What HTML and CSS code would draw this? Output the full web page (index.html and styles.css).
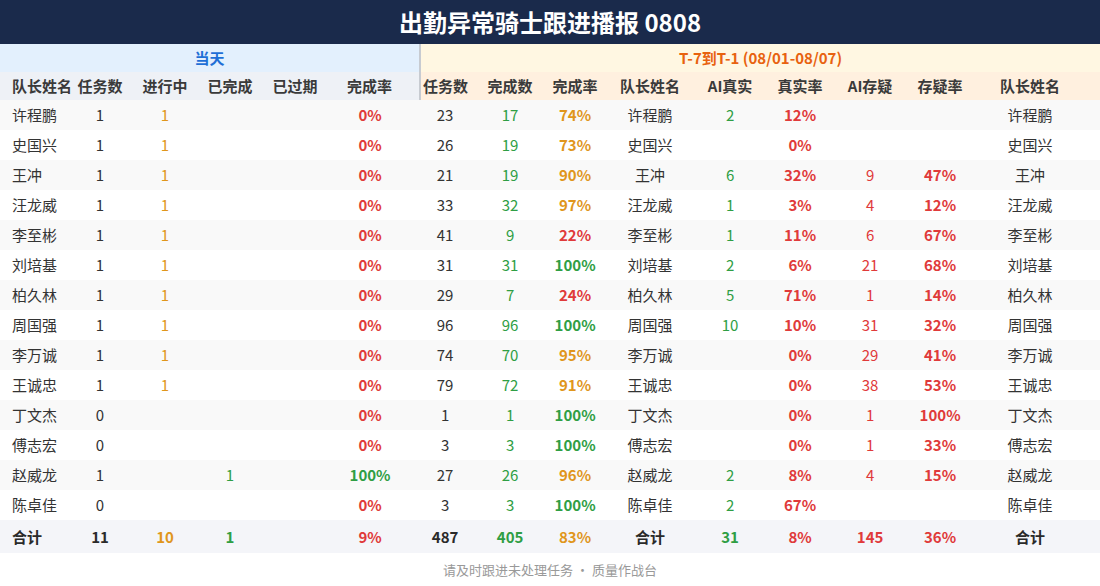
FILE: index.html
```html
<!DOCTYPE html>
<html lang="zh">
<head>
<meta charset="utf-8">
<title>出勤异常骑士跟进播报 0808</title>
<link rel="stylesheet" href="styles.css">
</head>
<body>
<div class="title">出勤异常骑士跟进播报 0808</div>
<table class="report">
  <colgroup>
    <col class="c1"><col class="c2"><col class="c3"><col class="c4"><col class="c5"><col class="c6">
    <col class="c7"><col class="c8"><col class="c9"><col class="c10"><col class="c11"><col class="c12"><col class="c13"><col class="c14"><col class="c15">
  </colgroup>
  <thead>
    <tr class="group">
      <th colspan="6" class="g-today">当天</th>
      <th colspan="9" class="g-week sep">T-7到T-1 (08/01-08/07)</th>
    </tr>
    <tr class="heads">
      <th class="lt name">队长姓名</th><th class="lt">任务数</th><th class="lt">进行中</th><th class="lt">已完成</th><th class="lt">已过期</th><th class="lt rate">完成率</th>
      <th class="rt sep">任务数</th><th class="rt">完成数</th><th class="rt">完成率</th><th class="rt">队长姓名</th><th class="rt">AI真实</th><th class="rt">真实率</th><th class="rt">AI存疑</th><th class="rt">存疑率</th><th class="rt last">队长姓名</th>
    </tr>
  </thead>
  <tbody>
    <tr><td class="name">许程鹏</td><td>1</td><td class="o">1</td><td></td><td></td><td class="rate r b">0%</td><td>23</td><td class="g">17</td><td class="o b">74%</td><td>许程鹏</td><td class="g">2</td><td class="r b">12%</td><td></td><td></td><td class="last">许程鹏</td></tr>
    <tr><td class="name">史国兴</td><td>1</td><td class="o">1</td><td></td><td></td><td class="rate r b">0%</td><td>26</td><td class="g">19</td><td class="o b">73%</td><td>史国兴</td><td></td><td class="r b">0%</td><td></td><td></td><td class="last">史国兴</td></tr>
    <tr><td class="name">王冲</td><td>1</td><td class="o">1</td><td></td><td></td><td class="rate r b">0%</td><td>21</td><td class="g">19</td><td class="o b">90%</td><td>王冲</td><td class="g">6</td><td class="r b">32%</td><td class="r">9</td><td class="r b">47%</td><td class="last">王冲</td></tr>
    <tr><td class="name">汪龙威</td><td>1</td><td class="o">1</td><td></td><td></td><td class="rate r b">0%</td><td>33</td><td class="g">32</td><td class="o b">97%</td><td>汪龙威</td><td class="g">1</td><td class="r b">3%</td><td class="r">4</td><td class="r b">12%</td><td class="last">汪龙威</td></tr>
    <tr><td class="name">李至彬</td><td>1</td><td class="o">1</td><td></td><td></td><td class="rate r b">0%</td><td>41</td><td class="g">9</td><td class="r b">22%</td><td>李至彬</td><td class="g">1</td><td class="r b">11%</td><td class="r">6</td><td class="r b">67%</td><td class="last">李至彬</td></tr>
    <tr><td class="name">刘培基</td><td>1</td><td class="o">1</td><td></td><td></td><td class="rate r b">0%</td><td>31</td><td class="g">31</td><td class="g b">100%</td><td>刘培基</td><td class="g">2</td><td class="r b">6%</td><td class="r">21</td><td class="r b">68%</td><td class="last">刘培基</td></tr>
    <tr><td class="name">柏久林</td><td>1</td><td class="o">1</td><td></td><td></td><td class="rate r b">0%</td><td>29</td><td class="g">7</td><td class="r b">24%</td><td>柏久林</td><td class="g">5</td><td class="r b">71%</td><td class="r">1</td><td class="r b">14%</td><td class="last">柏久林</td></tr>
    <tr><td class="name">周国强</td><td>1</td><td class="o">1</td><td></td><td></td><td class="rate r b">0%</td><td>96</td><td class="g">96</td><td class="g b">100%</td><td>周国强</td><td class="g">10</td><td class="r b">10%</td><td class="r">31</td><td class="r b">32%</td><td class="last">周国强</td></tr>
    <tr><td class="name">李万诚</td><td>1</td><td class="o">1</td><td></td><td></td><td class="rate r b">0%</td><td>74</td><td class="g">70</td><td class="o b">95%</td><td>李万诚</td><td></td><td class="r b">0%</td><td class="r">29</td><td class="r b">41%</td><td class="last">李万诚</td></tr>
    <tr><td class="name">王诚忠</td><td>1</td><td class="o">1</td><td></td><td></td><td class="rate r b">0%</td><td>79</td><td class="g">72</td><td class="o b">91%</td><td>王诚忠</td><td></td><td class="r b">0%</td><td class="r">38</td><td class="r b">53%</td><td class="last">王诚忠</td></tr>
    <tr><td class="name">丁文杰</td><td>0</td><td></td><td></td><td></td><td class="rate r b">0%</td><td>1</td><td class="g">1</td><td class="g b">100%</td><td>丁文杰</td><td></td><td class="r b">0%</td><td class="r">1</td><td class="r b">100%</td><td class="last">丁文杰</td></tr>
    <tr><td class="name">傅志宏</td><td>0</td><td></td><td></td><td></td><td class="rate r b">0%</td><td>3</td><td class="g">3</td><td class="g b">100%</td><td>傅志宏</td><td></td><td class="r b">0%</td><td class="r">1</td><td class="r b">33%</td><td class="last">傅志宏</td></tr>
    <tr><td class="name">赵威龙</td><td>1</td><td></td><td class="g">1</td><td></td><td class="rate g b">100%</td><td>27</td><td class="g">26</td><td class="o b">96%</td><td>赵威龙</td><td class="g">2</td><td class="r b">8%</td><td class="r">4</td><td class="r b">15%</td><td class="last">赵威龙</td></tr>
    <tr><td class="name">陈卓佳</td><td>0</td><td></td><td></td><td></td><td class="rate r b">0%</td><td>3</td><td class="g">3</td><td class="g b">100%</td><td>陈卓佳</td><td class="g">2</td><td class="r b">67%</td><td></td><td></td><td class="last">陈卓佳</td></tr>
  </tbody>
  <tfoot>
    <tr class="total"><td class="name">合计</td><td>11</td><td class="o">10</td><td class="g">1</td><td></td><td class="rate r">9%</td><td>487</td><td class="g">405</td><td class="o">83%</td><td>合计</td><td class="g">31</td><td class="r">8%</td><td class="r">145</td><td class="r">36%</td><td class="last">合计</td></tr>
  </tfoot>
</table>
<div class="foot">请及时跟进未处理任务 · 质量作战台</div>
</body>
</html>
```

FILE: styles.css
```css
html, body {
  margin: 0;
  padding: 0;
  background: #ffffff;
}
body {
  width: 1100px;
  font-family: "Noto Sans CJK SC", "Noto Sans", sans-serif;
  color: #333333;
}
.title {
  height: 44px;
  line-height: 44px;
  background: #1a2a4b;
  color: #ffffff;
  font-size: 24px;
  font-weight: 700;
  text-align: center;
}
.report {
  width: 1100px;
  border-collapse: collapse;
  table-layout: fixed;
  font-size: 15px;
}
.c1 { width: 72px; }
.c2 { width: 56px; }
.c3 { width: 74px; }
.c4 { width: 56px; }
.c5 { width: 74px; }
.c6 { width: 88px; }
.c7 { width: 50px; }
.c8 { width: 80px; }
.c9 { width: 50px; }
.c10 { width: 100px; }
.c11 { width: 60px; }
.c12 { width: 80px; }
.c13 { width: 60px; }
.c14 { width: 80px; }
.c15 { width: 120px; }

.report th, .report td {
  padding: 0;
  text-align: center;
  white-space: nowrap;
  overflow: visible;
}
.group th {
  height: 28px;
  line-height: 28px;
  font-size: 15px;
  font-weight: 700;
}
.g-today {
  background: #e3f0fd;
  color: #1f6fd6;
}
.g-week {
  background: #fff7e2;
  color: #e8620f;
}
.heads th {
  height: 28px;
  line-height: 28px;
  font-size: 15px;
  font-weight: 700;
  color: #3a3a3a;
}
.heads .lt { background: #eef1f6; }
.heads .rt { background: #fff0df; }
.sep { border-left: 2px solid #c7cbd1; }

.report .name {
  text-align: left;
  padding-left: 12px;
}
.report .rate { padding-right: 12px; }
.report .last { padding-right: 20px; }

tbody td {
  height: 30px;
  line-height: 30px;
}
tbody tr:nth-child(odd) { background: #f9f9f9; }
tbody tr:nth-child(even) { background: #ffffff; }

.total td {
  height: 33px;
  line-height: 33px;
  background: #f4f5f9;
  font-weight: 700;
  color: #2a2a2a;
}

.o { color: #e0961c; }
.g { color: #2f9e44; }
.r { color: #e03a3a; }
.b { font-weight: 700; }
.report .o, .total .o { color: #e0961c; }
.report .g, .total .g { color: #2f9e44; }
.report .r, .total .r { color: #e03a3a; }

.foot {
  height: 33px;
  line-height: 33px;
  text-align: center;
  font-size: 13px;
  color: #999999;
}
```
